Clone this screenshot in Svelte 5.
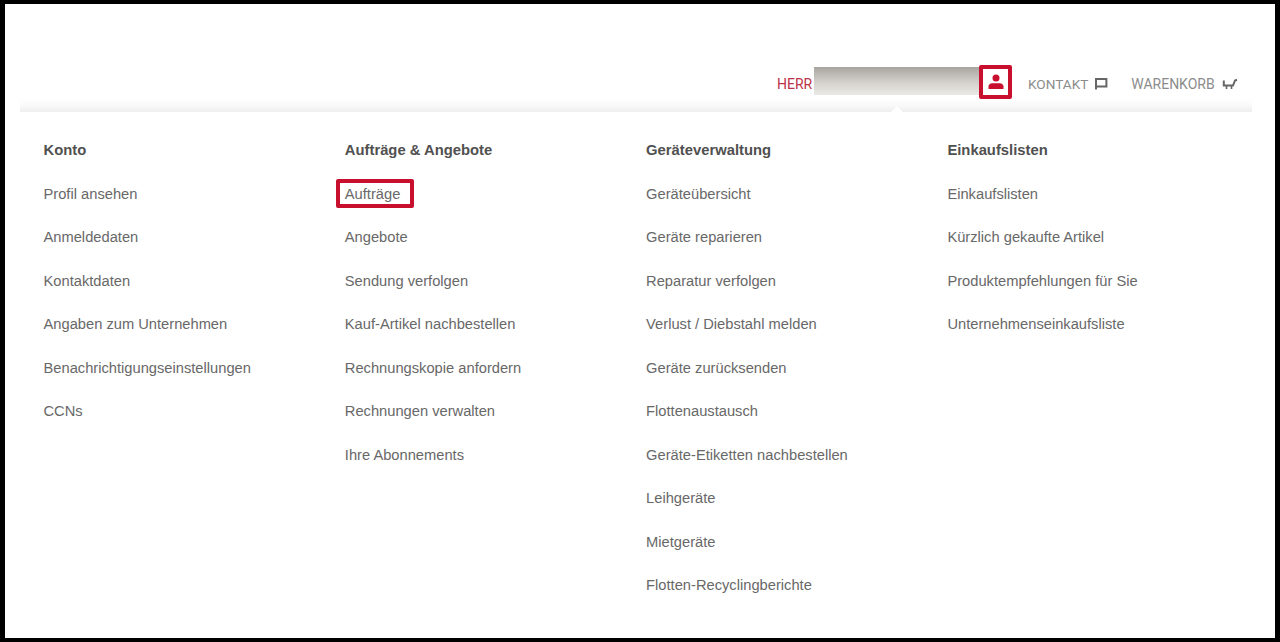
<script>
  const columns = [
    { title: 'Konto', links: ['Profil ansehen', 'Anmeldedaten', 'Kontaktdaten', 'Angaben zum Unternehmen', 'Benachrichtigungseinstellungen', 'CCNs'] },
    { title: 'Aufträge & Angebote', links: ['Aufträge', 'Angebote', 'Sendung verfolgen', 'Kauf-Artikel nachbestellen', 'Rechnungskopie anfordern', 'Rechnungen verwalten', 'Ihre Abonnements'] },
    { title: 'Geräteverwaltung', links: ['Geräteübersicht', 'Geräte reparieren', 'Reparatur verfolgen', 'Verlust / Diebstahl melden', 'Geräte zurücksenden', 'Flottenaustausch', 'Geräte-Etiketten nachbestellen', 'Leihgeräte', 'Mietgeräte', 'Flotten-Recyclingberichte'] },
    { title: 'Einkaufslisten', links: ['Einkaufslisten', 'Kürzlich gekaufte Artikel', 'Produktempfehlungen für Sie', 'Unternehmenseinkaufsliste'] }
  ];
</script>

<div class="frame">
  <header class="top">
    <span class="salutation">HERR</span>
    <span class="name"></span>
    <span class="account">
      <svg width="18" height="18" viewBox="0 0 18 18" fill="#c8102e">
        <circle cx="9" cy="5" r="3.5" />
        <path d="M1.5 16v-2.4c0-2 1.6-3.4 3.6-3.4h7.8c2 0 3.6 1.4 3.6 3.4V16z" />
      </svg>
    </span>
    <span class="nav contact">
      KONTAKT
      <svg width="14" height="14" viewBox="0 0 14 14" fill="none" stroke="#666" stroke-width="2">
        <path d="M2 12.5V2h10.4v7.6H2" />
      </svg>
    </span>
    <span class="nav cart">
      WARENKORB
      <svg width="16" height="14" viewBox="0 0 16 14" fill="none" stroke="#666" stroke-width="2">
        <path d="M1.8 3.5v5h9.2L13 3.5l2-.7" />
        <path d="M4.5 8.5v3.5M9.5 8.5v3.5" stroke-width="1.6" />
      </svg>
    </span>
  </header>
  <div class="divider"></div>
  <nav class="menu">
    {#each columns as col}
      <section class="col">
        <h3>{col.title}</h3>
        <ul>
          {#each col.links as link}
            <li><a class:marked={link === 'Aufträge'} href="#top">{link}</a></li>
          {/each}
        </ul>
      </section>
    {/each}
  </nav>
</div>

<style>
  :global(body) {
    margin: 0;
    background: #fff;
  }

  .frame {
    box-sizing: border-box;
    width: 1280px;
    height: 642px;
    border: solid #000;
    border-width: 4px 5px;
    background: #fff;
    font-family: "Liberation Sans", Arial, sans-serif;
    overflow: hidden;
  }

  .top {
    display: flex;
    align-items: center;
    height: 34px;
    margin-top: 61px;
    padding-left: 772px;
  }

  .salutation {
    width: 37px;
    padding-top: 4px;
    font-family: Roboto, "Liberation Sans", sans-serif;
    font-size: 14px;
    color: #bb3347;
  }

  .name {
    width: 166px;
    height: 28px;
    margin-bottom: 2px;
    background: linear-gradient(180deg, #a8a49f 0%, #d4d1cc 55%, #ebe9e5 100%);
  }

  .account {
    box-sizing: border-box;
    display: flex;
    align-items: center;
    justify-content: center;
    width: 33px;
    height: 34px;
    border: 4px solid #c8102e;
    border-radius: 2px;
    margin-left: -1px;
  }

  .nav {
    display: flex;
    align-items: center;
    gap: 6px;
    padding-top: 4px;
    font-family: Roboto, "Liberation Sans", sans-serif;
    font-size: 13.6px;
    color: #8c8c8c;
  }

  .contact {
    margin-left: 16px;
  }

  .cart {
    gap: 7px;
    margin-left: 23px;
    font-size: 14px;
  }

  .divider {
    position: relative;
    height: 13px;
    margin: 0 23px 0 15px;
    background: linear-gradient(180deg, #fff 0%, #f9f9f9 50%, #eeeeee 100%);
  }

  /* little caret under the account button */
  .divider::after {
    content: "";
    position: absolute;
    left: 871px;
    bottom: 0;
    border: solid transparent;
    border-width: 0 6px 6px;
    border-bottom-color: #fff;
  }

  .menu {
    display: grid;
    grid-template-columns: repeat(4, 301.3px);
    padding: 28px 0 0 38.5px;
  }

  h3 {
    margin: 0;
    font-size: 14.8px;
    line-height: 20px;
    font-weight: 700;
    color: #505050;
  }

  ul {
    list-style: none;
    margin: 0;
    padding: 0;
  }

  li {
    height: 20px;
    line-height: 20px;
    padding-top: 23.55px;
  }

  a {
    position: relative;
    font-size: 14.7px;
    color: #686868;
    text-decoration: none;
  }

  .marked::after {
    content: "";
    position: absolute;
    left: -9px;
    right: -14px;
    top: -7px;
    bottom: -6px;
    border: 4px solid #c8102e;
    border-radius: 2px;
  }
</style>
